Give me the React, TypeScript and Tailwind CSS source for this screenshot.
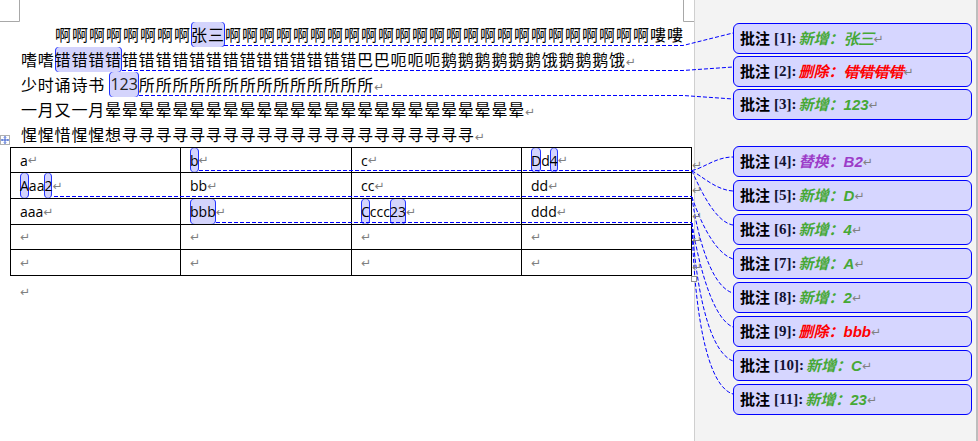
import React from "react";

/* word-like review view: document on the left, comment balloons on the right */

const HL =
  "bg-[#d4d4fc] shadow-[inset_1px_0_0_#2233ff,inset_-1px_0_0_#2233ff] rounded-[4px]";
const CJK = "font-['Noto_Sans_CJK_SC',sans-serif]";

function PM({ className = "" }: { className?: string }) {
  return (
    <span
      className={`font-['DejaVu_Sans',sans-serif] text-[12px] text-[#808080] tracking-normal ${className}`}
    >
      ↵
    </span>
  );
}

function Hl({ children, className = "" }: { children: React.ReactNode; className?: string }) {
  return <span className={`inline-block h-[25px] align-top ${HL} ${className}`}>{children}</span>;
}

type Part = { t: string; h?: boolean };
const p = (t: string, h = false): Part => ({ t, h });

const rows: { h: string; cells: Part[][] }[] = [
  { h: "h-[24px]", cells: [[p("a")], [p("b", true)], [p("c")], [p("D", true), p("d"), p("4", true)]] },
  { h: "h-[25px]", cells: [[p("A", true), p("aa"), p("2", true)], [p("bb")], [p("cc")], [p("dd")]] },
  { h: "h-[25px]", cells: [[p("aaa")], [p("bbb", true)], [p("C", true), p("ccc"), p("23", true)], [p("ddd")]] },
  { h: "h-[24px]", cells: [[], [], [], []] },
  { h: "h-[25px]", cells: [[], [], [], []] },
];

const comments: { n: number; kind: string; text: string; color: string }[] = [
  { n: 1, kind: "新增", text: "张三", color: "text-[#46a836]" },
  { n: 2, kind: "删除", text: "错错错错", color: "text-[#ff0000]" },
  { n: 3, kind: "新增", text: "123", color: "text-[#46a836]" },
  { n: 4, kind: "替换", text: "B2", color: "text-[#9c3cc8]" },
  { n: 5, kind: "新增", text: "D", color: "text-[#46a836]" },
  { n: 6, kind: "新增", text: "4", color: "text-[#46a836]" },
  { n: 7, kind: "新增", text: "A", color: "text-[#46a836]" },
  { n: 8, kind: "新增", text: "2", color: "text-[#46a836]" },
  { n: 9, kind: "删除", text: "bbb", color: "text-[#ff0000]" },
  { n: 10, kind: "新增", text: "C", color: "text-[#46a836]" },
  { n: 11, kind: "新增", text: "23", color: "text-[#46a836]" },
];

function Balloon({ c }: { c: (typeof comments)[number] }) {
  return (
    <div className="flex h-[31px] w-[239px] items-center rounded-[6px] border-[1.5px] border-[#0000ff] bg-[#d6d6ff] pl-[6px] whitespace-nowrap">
      <span className={`${CJK} text-[15px] font-bold text-black`}>批注</span>
      <span className="ml-[4px] font-['Liberation_Serif',serif] text-[15px] font-bold text-[#111133]">
        [{c.n}]:
      </span>
      <span className={`${CJK} ml-[2px] text-[15px] font-bold italic ${c.color}`}>
        {c.kind}：<span className="font-['Liberation_Sans',sans-serif]">{c.text}</span>
      </span>
      <PM />
    </div>
  );
}

const dash = { stroke: "#0000ff", strokeWidth: 1, strokeDasharray: "4 2", fill: "none" };

function Overlay() {
  const marks = [162, 187, 213, 237, 264];
  return (
    <div className="pointer-events-none absolute inset-0 z-10">
      <svg width="978" height="441" className="absolute left-0 top-0">
        {/* page corner marks */}
        <path d="M19.5 0 V21.5 H0 M683.5 0 V21.5 H694" stroke="#a8a8a8" strokeWidth="1" fill="none" />
        {/* body text connectors */}
        <path d="M224 45.5 H683 L733 33" {...dash} />
        <path d="M122 70.5 H683 L733 67" {...dash} />
        <path d="M139 95.5 H683 L733 99" {...dash} />
        {/* table connectors */}
        <path d="M199 170.5 H692" {...dash} />
        <path d="M692 170.5 C704 168, 716 157, 733 157" {...dash} />
        <path d="M692 171 C702 176, 716 190, 733 191" {...dash} />
        <path d="M692 171 C698 184, 714 222, 733 225" {...dash} />
        <path d="M54 196.5 H692" {...dash} />
        <path d="M692 197 C697 212, 712 252, 733 259" {...dash} />
        <path d="M692 197 C695 222, 708 286, 733 293" {...dash} />
        <path d="M216 222.5 H692" {...dash} />
        <path d="M692 223 C696 250, 710 318, 733 327" {...dash} />
        <path d="M692 223 C694 262, 704 350, 733 361" {...dash} />
        <path d="M692 223 C693 272, 700 384, 733 394" {...dash} />
        {/* table resize handle */}
        <rect x="691.5" y="276.5" width="5" height="5" fill="white" stroke="#8c8c8c" />
        {/* table move handle */}
        <rect x="0.5" y="135.5" width="9" height="9" fill="white" stroke="#b0b0b0" />
        <path d="M5 136.5 V143.5 M1.5 140 H8.5" stroke="#3a5fcd" strokeWidth="1" />
        <path d="M4 137.5 L5 136.5 L6 137.5 M4 142.5 L5 143.5 L6 142.5 M2.5 139 L1.5 140 L2.5 141 M7.5 139 L8.5 140 L7.5 141" stroke="#3a5fcd" strokeWidth="1" fill="none" />
      </svg>
      {marks.map((y) => (
        <span key={y} className="absolute left-[692px] leading-none" style={{ top: y - 7 }}>
          <PM />
        </span>
      ))}
    </div>
  );
}

export default function App() {
  const line = `h-[25px] leading-[25px] whitespace-nowrap ${CJK} text-[16px] text-black`;
  return (
    <div className="relative flex h-[441px] w-[978px] overflow-hidden bg-white">
      {/* document */}
      <div className="w-[694px] shrink-0 bg-white pt-[22px]">
        <div className={`${line} pl-[55px] tracking-[1px]`}>
          {"啊".repeat(8)}
          <Hl>张三</Hl>
          {"啊".repeat(25)}嘍嘍
        </div>
        <div className={`${line} pl-[21px] tracking-[0.8px]`}>
          嗜嗜<Hl>错错错错</Hl>
          {"错".repeat(14)}巴巴呃呃呃鹅鹅鹅鹅鹅鹅饿鹅鹅鹅饿
          <PM />
        </div>
        <div className={`${line} pl-[21px] tracking-[0.8px]`}>
          少时诵诗书{" "}
          <Hl className="font-['Open_Sans',sans-serif] tracking-normal text-[#222] px-[1px]">123</Hl>
          {"所".repeat(14)}
          <PM />
        </div>
        <div className={`${line} pl-[21px] tracking-[0.8px]`}>
          一月又一月{"晕".repeat(25)}
          <PM />
        </div>
        <div className={`${line} pl-[21px] tracking-[0.8px]`}>
          惺惺惜惺惺想{"寻".repeat(21)}
          <PM />
        </div>

        <table className="ml-[10px] table-fixed border-collapse font-['Open_Sans',sans-serif] text-[14px] text-black">
          <colgroup>
            <col className="w-[170px]" />
            <col className="w-[171px]" />
            <col className="w-[170px]" />
            <col className="w-[170px]" />
          </colgroup>
          <tbody>
            {rows.map((r, i) => (
              <tr key={i}>
                {r.cells.map((cell, j) => (
                  <td key={j} className="border border-black p-0">
                    <div className={`flex ${r.h} items-stretch pl-[9px]`}>
                      {cell.map((part, k) =>
                        part.h ? (
                          <span key={k} className={`flex items-center ${HL}`}>
                            {part.t}
                          </span>
                        ) : (
                          <span key={k} className="flex items-center">
                            {part.t}
                          </span>
                        ),
                      )}
                      <span className="flex items-center">
                        <PM />
                      </span>
                    </div>
                  </td>
                ))}
              </tr>
            ))}
          </tbody>
        </table>
        <div className="mt-[6px] pl-[20px] leading-none">
          <PM />
        </div>
      </div>

      {/* comment pane */}
      <div className="flex flex-1 flex-col border-l border-r-2 border-l-[#cfcfcf] border-r-[#bdbdbd] bg-[#f3f3f3] pl-[38px] pt-[23px]">
        <div className="flex flex-col gap-[2px]">
          {comments.slice(0, 3).map((c) => (
            <Balloon key={c.n} c={c} />
          ))}
        </div>
        <div className="mt-[26px] flex flex-col gap-[3px]">
          {comments.slice(3).map((c) => (
            <Balloon key={c.n} c={c} />
          ))}
        </div>
      </div>

      <Overlay />
    </div>
  );
}
